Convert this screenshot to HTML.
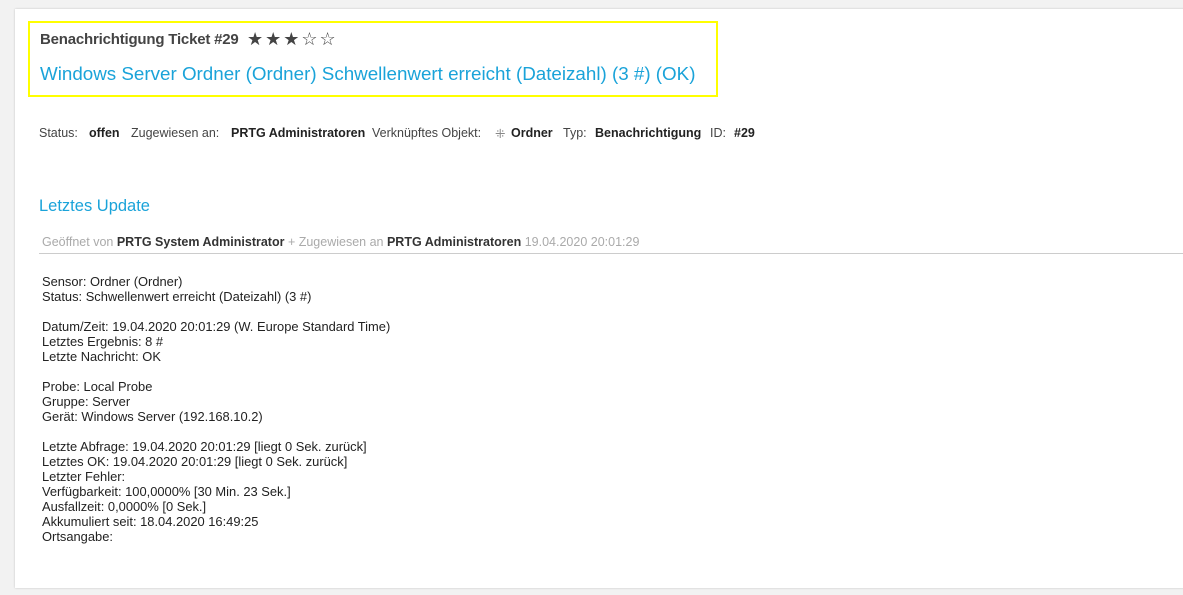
<!DOCTYPE html>
<html><head><meta charset="utf-8"><style>
body{margin:0;width:1183px;height:595px;background:#f2f2f2;font-family:"Liberation Sans",sans-serif;overflow:hidden;position:relative}
.card{position:absolute;left:15px;top:9px;width:1180px;height:579px;background:#fff;box-shadow:0 0 2px rgba(0,0,0,.2)}
.hl{position:absolute;left:28px;top:21px;width:686px;height:72px;border:2px solid #ffff00}
.t1{position:absolute;left:40px;top:31px;font-size:15px;font-weight:bold;color:#444;letter-spacing:-0.2px}
.stars{position:absolute;left:247px;top:29px;font-size:18px;color:#444;letter-spacing:2px}
.t2{position:absolute;left:40px;top:63px;font-size:18.8px;color:#1aa3d9}
.m{position:absolute;top:126px;font-size:12.5px;color:#444;white-space:nowrap}
.m.b{font-weight:bold;color:#222}
.h2{position:absolute;left:39px;top:197px;font-size:16.5px;color:#1aa3d9}
.sub{position:absolute;left:42px;top:235px;font-size:12.5px;color:#aaa;white-space:nowrap}
.sub b{color:#333}
.line{position:absolute;left:39px;top:253px;width:1144px;height:1px;background:#ccc}
.body{position:absolute;left:42px;top:274px;font-size:12.9px;line-height:15px;color:#222;white-space:pre}
</style></head><body>
<div class="card"></div>
<div class="hl"></div>
<div class="t1">Benachrichtigung Ticket #29</div>
<div class="stars">★★★☆☆</div>
<div class="t2">Windows Server Ordner (Ordner) Schwellenwert erreicht (Dateizahl) (3 #) (OK)</div>
<span class="m" style="left:39px">Status:</span>
<span class="m b" style="left:89px">offen</span>
<span class="m" style="left:131px">Zugewiesen an:</span>
<span class="m b" style="left:231px">PRTG Administratoren</span>
<span class="m" style="left:372px">Verknüpftes Objekt:</span>
<span class="m" style="left:495px;color:#888">⁜</span>
<span class="m b" style="left:511px">Ordner</span>
<span class="m" style="left:563px">Typ:</span>
<span class="m b" style="left:595px">Benachrichtigung</span>
<span class="m" style="left:710px">ID:</span>
<span class="m b" style="left:734px">#29</span>
<div class="h2">Letztes Update</div>
<div class="sub">Geöffnet von <b>PRTG System Administrator</b> + Zugewiesen an <b>PRTG Administratoren</b> 19.04.2020 20:01:29</div>
<div class="line"></div>
<div class="body">Sensor: Ordner (Ordner)
Status: Schwellenwert erreicht (Dateizahl) (3 #)

Datum/Zeit: 19.04.2020 20:01:29 (W. Europe Standard Time)
Letztes Ergebnis: 8 #
Letzte Nachricht: OK

Probe: Local Probe
Gruppe: Server
Gerät: Windows Server (192.168.10.2)

Letzte Abfrage: 19.04.2020 20:01:29 [liegt 0 Sek. zurück]
Letztes OK: 19.04.2020 20:01:29 [liegt 0 Sek. zurück]
Letzter Fehler:
Verfügbarkeit: 100,0000% [30 Min. 23 Sek.]
Ausfallzeit: 0,0000% [0 Sek.]
Akkumuliert seit: 18.04.2020 16:49:25
Ortsangabe:</div>
</body></html>
